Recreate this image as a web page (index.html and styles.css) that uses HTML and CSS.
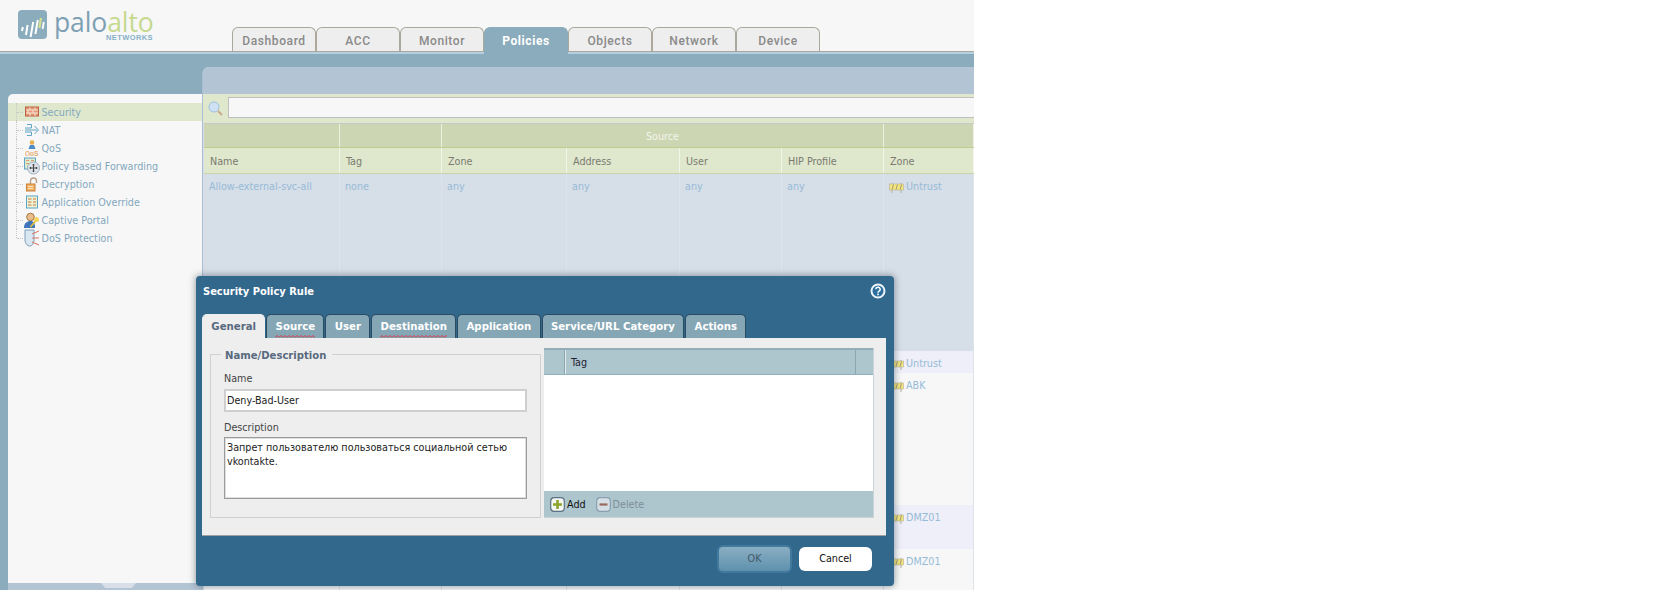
FILE: index.html
```html
<!DOCTYPE html>
<html lang="en">
<head>
<meta charset="utf-8">
<title>Security Policy Rule</title>
<link rel="stylesheet" href="styles.css">
</head>
<body>
<div class="app">
  <header class="topbar">
    <div class="logo">
      <svg class="logo-mark" width="29" height="29" viewBox="0 0 29 29"><rect width="29" height="29" rx="4" fill="#8aacbc"/><path d="M4 21l.8-4M8 25l1.6-10M12.6 27l2.6-15M17.4 24l2.4-14" stroke="#fff" stroke-width="2"/><path d="M21.4 18l1.6-10" stroke="#d3e08f" stroke-width="2.2"/><path d="M24.6 19l1.2-7" stroke="#fff" stroke-width="1.8"/></svg>
      <div class="logo-text">
        <div class="logo-word"><span class="logo-palo">palo</span><span class="logo-alto">alto</span></div>
        <div class="logo-sub">NETWORKS</div>
      </div>
    </div>
    <nav class="tabs">
      <div class="tab">Dashboard</div>
      <div class="tab">ACC</div>
      <div class="tab">Monitor</div>
      <div class="tab active">Policies</div>
      <div class="tab">Objects</div>
      <div class="tab">Network</div>
      <div class="tab">Device</div>
    </nav>
  </header>
  <main class="workspace">
    <aside class="side-col">
      <div class="sidebar">
        <div class="tree-item selected"><svg class="ic" viewBox="0 0 14 16"><rect y="3" width="13" height="9" fill="#e39a76" stroke="#b9613f" x=".5"/><path d="M1 6h12M1 9h12M5 3.500v2.500M10 3.500v2.500M3 6v3M8 6v3M5 9v3M10 9v3" stroke="#fbe3d4" fill="none"/></svg><span>Security</span></div>
        <div class="tree-item"><svg class="ic" viewBox="0 0 14 16"><path d="M2 2.500h4.500v3.500H0M0 8h12M2 13.500h4.500V10H0M9.500 4l4 4-4 4" fill="none" stroke="#5fa4c4"/></svg><span>NAT</span></div>
        <div class="tree-item"><svg class="ic" viewBox="0 0 14 16"><circle cx="7" cy="2.500" r="2.300" fill="#e8b04f"/><path d="M3.500 9l1.500-4h4l1.500 4z" fill="#4d8cc8"/><text x="0" y="15.500" class="qos">QoS</text></svg><span>QoS</span></div>
        <div class="tree-item"><svg class="ic ic-wide" viewBox="0 0 16 17"><rect x=".5" y=".5" width="11" height="11" fill="#dcebd0" stroke="#5fa4c4"/><path d="M2 3h3M7 3h3M2 6h3" stroke="#d9a06a"/><circle cx="9.500" cy="10.500" r="6" fill="#dde3ea" stroke="#9fb2c0"/><path d="M9.500 6.500v8M5.500 10.500h8" stroke="#444"/><path d="M8.500 7.500h2M8.500 13.500h2M6.500 9.500v2M12.500 9.500v2" stroke="#444"/></svg><span>Policy Based Forwarding</span></div>
        <div class="tree-item"><svg class="ic" viewBox="0 0 14 16"><path d="M5.500 8V5a3 3 0 0 1 6 0v2" fill="none" stroke="#b9a08c" stroke-width="1.400"/><rect x="1.500" y="8" width="8.500" height="7" fill="#f0b060" stroke="#c9803c"/><path d="M3 10.500h5M3 12.500h5" stroke="#fbe3c0"/></svg><span>Decryption</span></div>
        <div class="tree-item"><svg class="ic" viewBox="0 0 14 16"><rect x="1.500" y="2" width="11" height="12" fill="#eaf2d8" stroke="#5fa4c4"/><path d="M3 5h3.500M8 5h3M3 8h3.500M8 8h3M3 11h3.500M8 11h3" stroke="#d9a06a" stroke-width="1.600"/></svg><span>Application Override</span></div>
        <div class="tree-item"><svg class="ic ic-wide" viewBox="0 0 16 16"><circle cx="6.500" cy="5" r="3.800" fill="#e9bd8c" stroke="#a67743"/><path d="M0 16c0-5 3-7 6.500-7S11 11 11 16z" fill="#3f76bb"/><circle cx="12.500" cy="7.500" r="2.500" fill="#f3d85d"/><path d="M11.500 9l-5 6" stroke="#e3c03c" stroke-width="1.700"/></svg><span>Captive Portal</span></div>
        <div class="tree-item"><svg class="ic ic-wide" viewBox="0 0 16 18"><path d="M1 1h9v10c0 3-2 6-4 6-3 0-5-3-5-6z" fill="#d9e7f2" stroke="#7e9fbb"/><path d="M8 5l7-3M8 9h7M8 13l7 3" stroke="#d9725f"/></svg><span>DoS Protection</span></div>
      </div>
      <div class="side-foot"><div class="grip"></div></div>
    </aside>
    <section class="content">
      <div class="content-head"></div>
      <div class="search-row">
        <svg class="search-ic" width="15" height="15" viewBox="0 0 15 15"><circle cx="6" cy="6" r="5" fill="#cfe1f2" stroke="#9cc0df"/><path d="M10 10l4 4" stroke="#c9a98c" stroke-width="2"/></svg>
        <div class="search-box"></div>
      </div>
      <div class="grid">
        <div class="grid-row group-row">
          <div class="c c1"></div><div class="c c2"></div><div class="c src">Source</div><div class="c c7"></div>
        </div>
        <div class="grid-row head-row">
          <div class="c c1">Name</div><div class="c c2">Tag</div><div class="c c3">Zone</div><div class="c c4">Address</div><div class="c c5">User</div><div class="c c6">HIP Profile</div><div class="c c7">Zone</div>
        </div>
        <div class="grid-row data-row sel">
          <div class="c c1">Allow-external-svc-all</div><div class="c c2">none</div><div class="c c3">any</div><div class="c c4">any</div><div class="c c5">any</div><div class="c c6">any</div>
          <div class="c c7 zone"><svg class="zone-ic" viewBox="0 0 15 11"><path d="M3 1v10M12 1v10" stroke="#b5b09a"/><rect x=".5" y="2" width="14" height="6" fill="#f4e57e" stroke="#b5b09a" stroke-width=".6"/><path d="M4.500 2.500L3 7.500M8.500 2.500L7 7.500M12.500 2.500L11 7.500" stroke="#a09a70"/></svg>Untrust</div>
        </div>
        <div class="grid-row data-row r2">
          <div class="c c1"></div><div class="c c2"></div><div class="c c3"></div><div class="c c4"></div><div class="c c5"></div><div class="c c6"></div>
          <div class="c c7 zone"><svg class="zone-ic" viewBox="0 0 15 11"><path d="M3 1v10M12 1v10" stroke="#b5b09a"/><rect x=".5" y="2" width="14" height="6" fill="#f4e57e" stroke="#b5b09a" stroke-width=".6"/><path d="M4.500 2.500L3 7.500M8.500 2.500L7 7.500M12.500 2.500L11 7.500" stroke="#a09a70"/></svg>Untrust</div>
        </div>
        <div class="grid-row data-row r3">
          <div class="c c1"></div><div class="c c2"></div><div class="c c3"></div><div class="c c4"></div><div class="c c5"></div><div class="c c6"></div>
          <div class="c c7 zone"><svg class="zone-ic" viewBox="0 0 15 11"><path d="M3 1v10M12 1v10" stroke="#b5b09a"/><rect x=".5" y="2" width="14" height="6" fill="#f4e57e" stroke="#b5b09a" stroke-width=".6"/><path d="M4.500 2.500L3 7.500M8.500 2.500L7 7.500M12.500 2.500L11 7.500" stroke="#a09a70"/></svg>ABK</div>
        </div>
        <div class="grid-row data-row r4">
          <div class="c c1"></div><div class="c c2"></div><div class="c c3"></div><div class="c c4"></div><div class="c c5"></div><div class="c c6"></div>
          <div class="c c7 zone"><svg class="zone-ic" viewBox="0 0 15 11"><path d="M3 1v10M12 1v10" stroke="#b5b09a"/><rect x=".5" y="2" width="14" height="6" fill="#f4e57e" stroke="#b5b09a" stroke-width=".6"/><path d="M4.500 2.500L3 7.500M8.500 2.500L7 7.500M12.500 2.500L11 7.500" stroke="#a09a70"/></svg>DMZ01</div>
        </div>
        <div class="grid-row data-row r5">
          <div class="c c1"></div><div class="c c2"></div><div class="c c3"></div><div class="c c4"></div><div class="c c5"></div><div class="c c6"></div>
          <div class="c c7 zone"><svg class="zone-ic" viewBox="0 0 15 11"><path d="M3 1v10M12 1v10" stroke="#b5b09a"/><rect x=".5" y="2" width="14" height="6" fill="#f4e57e" stroke="#b5b09a" stroke-width=".6"/><path d="M4.500 2.500L3 7.500M8.500 2.500L7 7.500M12.500 2.500L11 7.500" stroke="#a09a70"/></svg>DMZ01</div>
        </div>
      </div>
    </section>
  </main>
  <div class="dialog">
    <div class="dialog-title">
      <span>Security Policy Rule</span>
      <svg class="help" width="16" height="16" viewBox="0 0 16 16"><circle cx="8" cy="8" r="6.500" fill="#2c6f9e" stroke="#eef4f8" stroke-width="2"/><path d="M5.800 6.300a2.200 2 0 1 1 3.200 1.800c-.7.400-1 .8-1 1.600" fill="none" stroke="#fff" stroke-width="1.500"/><rect x="7.200" y="10.600" width="1.600" height="1.600" fill="#fff"/></svg>
    </div>
    <div class="dtabs">
      <div class="dtab on">General</div>
      <div class="dtab err">Source</div>
      <div class="dtab">User</div>
      <div class="dtab err">Destination</div>
      <div class="dtab">Application</div>
      <div class="dtab">Service/URL Category</div>
      <div class="dtab">Actions</div>
    </div>
    <div class="dpanel">
      <fieldset class="nd">
        <legend>Name/Description</legend>
        <label class="lbl">Name</label>
        <div class="inp">Deny-Bad-User</div>
        <label class="lbl lbl2">Description</label>
        <div class="txt">Запрет пользователю пользоваться социальной сетью vkontakte.</div>
      </fieldset>
      <div class="tagbox">
        <div class="tag-head"><div class="th-a"></div><div class="th-b">Tag</div><div class="th-c"></div></div>
        <div class="tag-body"></div>
        <div class="tag-foot">
          <span class="tbtn"><svg width="15" height="15" viewBox="0 0 15 15"><rect x=".7" y=".7" width="13.600" height="13.600" rx="3.500" fill="#f4f6f2" stroke="#5d7284" stroke-width="1.200"/><path d="M7.500 3v9M3 7.500h9" stroke="#8da52f" stroke-width="2.600"/></svg>Add</span>
          <span class="tbtn off"><svg width="15" height="15" viewBox="0 0 15 15"><rect x=".7" y=".7" width="13.600" height="13.600" rx="3.500" fill="#d5dfe6" stroke="#8ba0ae" stroke-width="1.200"/><path d="M3.500 7.500h8" stroke="#9a6a5c" stroke-width="2.200"/></svg>Delete</span>
        </div>
      </div>
    </div>
    <div class="dfoot">
      <div class="btn ok">OK</div>
      <div class="btn cancel">Cancel</div>
    </div>
  </div>
</div>
</body>
</html>
```
FILE: styles.css
```css
* { box-sizing: border-box; }
html, body { margin: 0; padding: 0; background: #fff; }
body { width: 1662px; height: 590px; overflow: hidden; font-family: "DejaVu Sans Condensed", "DejaVu Sans", sans-serif; font-stretch: condensed; }
.app { position: relative; width: 974px; height: 590px; overflow: hidden; background: #8aacbc; display: flex; flex-direction: column; }

.topbar { height: 54px; flex: none; background: #f7f7f7; border-bottom: 2px solid #b5d0e0; box-shadow: inset 0 -1px 0 #a9a9a0; display: flex; }
.logo { width: 232px; flex: none; padding: 10px 0 0 18px; display: flex; gap: 7px; }
.logo-mark { flex: none; }
.logo-text { width: 99px; }
.logo-word { font-family: "Open Sans", "Liberation Sans", sans-serif; font-stretch: normal; font-size: 26.500px; line-height: 24px; height: 24px; letter-spacing: -.1px; white-space: nowrap; display: flex; }
.logo-palo { color: #7da0b4; display: block; line-height: 24px; height: 24px; }
.logo-alto { color: #c6d98f; display: block; line-height: 24px; height: 24px; }
.logo-sub { font-family: "Liberation Sans", sans-serif; font-stretch: normal; font-size: 7.500px; line-height: 8px; color: #86b0c8; text-align: right; letter-spacing: .4px; font-weight: 700; }
.tabs { display: flex; padding-top: 27px; align-items: flex-start; }
.tab { width: 84px; height: 24px; font-family: Roboto, "Liberation Sans", sans-serif; font-stretch: normal; font-size: 12px; font-weight: 500; color: #8a8a8a; letter-spacing: .6px; text-align: center; line-height: 26px; background: #eeeeee; border: 1px solid #aaa89c; border-bottom: 0; border-radius: 6px 6px 0 0; }
.tab.active { height: 27px; background: #8aacbc; color: #fff; font-weight: 700; border-color: #8aacbc; }

.workspace { flex: 1; display: flex; padding-left: 8px; min-height: 0; }
.side-col { width: 194px; flex: none; padding-top: 40px; display: flex; flex-direction: column; }
.sidebar { flex: 1; background: #f7f7f7; border-radius: 5px 0 0 0; padding-top: 9px; }
.side-foot { height: 7px; flex: none; background: #b3c4d4; display: flex; padding-left: 93px; }
.grip { width: 35px; height: 5px; background: #d8dfe8; clip-path: polygon(0 0, 100% 0, 88% 100%, 12% 100%); }
.tree-item { height: 18px; display: flex; align-items: center; padding-left: 17px; font-size: 10.700px; color: #83a7bd; white-space: nowrap; position: relative; }
.tree-item::before { content: ""; position: absolute; left: 8px; top: 0; bottom: 0; width: 8px; border-left: 1px dotted #c8c8c8; }
.tree-item::after { content: ""; position: absolute; left: 9px; top: 9px; width: 6px; border-top: 1px dotted #c8c8c8; }
.tree-item:last-child::before { bottom: 9px; }
.tree-item.selected { background: #dfe7cd; }
.ic { width: 14px; height: 16px; flex: none; margin-right: 2.500px; }
.ic-wide { width: 16px; height: 18px; margin-left: -1px; margin-right: 1.500px; position: relative; z-index: 1; }
.qos { font: 700 6.500px "Liberation Sans", sans-serif; fill: #e5ac73; }

.content { flex: 1; margin-top: 13px; min-width: 0; background: #d6dee8; border-left: 1px solid #abbdd2; border-radius: 7px 0 0 0; overflow: hidden; }
.content-head { height: 27px; background: #b3c4d4; }
.search-row { height: 29px; background: #dfe7cd; display: flex; align-items: flex-start; gap: 5px; padding: 3px 0 0 5px; }
.search-ic { flex: none; margin-top: 4px; }
.search-box { flex: 1; height: 21px; margin-right: -2px; background: #f7f7f7; border: 1px solid #bfbfbf; }
.grid { margin-left: 1px; }
.grid-row { display: grid; grid-template-columns: 136px 102px 125px 113px 102px 102px 90px; }
.c { font-size: 10.700px; padding: 0 6px; border-right: 1px solid #dce3e9; white-space: nowrap; overflow: hidden; }
.group-row { height: 25px; background: #cdd6b2; border-top: 1px solid #c8c8c8; border-bottom: 1px solid #c0cc90; line-height: 25px; }
.group-row .c { border-right: 1px solid #eef0e4; }
.group-row .src { grid-column: 3 / span 4; text-align: center; color: #f3f4ec; }
.head-row { height: 26px; background: #dfe7cd; border-bottom: 1px solid #c9d4a8; line-height: 27px; color: #7b7b70; }
.head-row .c { border-right: 1px solid #f3f5ea; }
.data-row { color: #96bbd7; line-height: 14px; }
.data-row .c { padding: 6px 4px 0 5px; }
.sel { height: 177px; background: #d6dee8; }
.r2 { height: 22px; background: #eeeff8; }
.r3 { height: 132px; background: #f7f7f7; }
.r4 { height: 44px; background: #eeeff8; }
.r5 { height: 60px; background: #f7f7f7; }
.data-row .zone { display: flex; align-items: flex-start; gap: 2px; padding-left: 5px; }
.zone-ic { width: 15px; height: 11px; margin-top: 2px; flex: none; }

.dialog { position: absolute; left: 196px; top: 276px; width: 698px; height: 310px; background: #31688c; border-radius: 4px; box-shadow: 0 0 6px 1px rgba(70,85,95,.5); display: flex; flex-direction: column; padding: 0 8px 0 6px; }
.dialog-title { height: 38px; flex: none; display: flex; justify-content: space-between; align-items: center; padding: 0 0 8px 1px; color: #fff; font-weight: 700; font-size: 11px; }
.help { margin-right: 0; }
.dtabs { display: flex; gap: 1px; height: 24px; flex: none; }
.dtab { height: 24px; padding: 0 8.300px; background: #85a6b5; color: #fff; font-weight: 700; font-size: 11.300px; line-height: 23px; border: 1px solid #2a4a60; border-bottom: 0; border-radius: 5px 5px 0 0; position: relative; white-space: nowrap; }
.dtab.on { background: #eeeeee; color: #586a7e; border-color: #eeeeee; z-index: 1; }
.dtab.err::after { content: ""; position: absolute; left: 8px; right: 8px; bottom: 0; height: 3px; background: url("data:image/svg+xml,%3Csvg xmlns='http://www.w3.org/2000/svg' width='4' height='3'%3E%3Cpath d='M0 2.500L2 .5L4 2.500' fill='none' stroke='%23e0303c'/%3E%3C/svg%3E") repeat-x; }
.dpanel { flex: none; height: 198px; background: #eeeeee; border-bottom: 1px solid #9aa0a4; display: flex; align-items: flex-start; padding: 10px 0 0 8px; gap: 3px; }
.nd { width: 331px; height: 170px; margin: 0; padding: 0 12px 0 13px; border: 1px solid #d0d0d0; flex: none; }
.nd legend { font-weight: 700; font-size: 11.200px; color: #586a7e; padding: 0 6px 0 4px; margin-left: -3px; line-height: 12px; position: relative; top: 2px; }
.lbl { display: block; font-size: 10.700px; color: #444; line-height: 14px; margin: 12px 0 3px; }
.lbl2 { margin: 9px 0 2px; }
.inp { height: 23px; width: 303px; background: #fff; border: 2px solid #cfcfcf; font-size: 10.700px; color: #222; line-height: 19px; padding-left: 1px; }
.txt { height: 62px; width: 303px; background: #fff; border: 1px solid #9c9c9c; box-shadow: inset 0 0 0 1px #ddd; font-size: 10.700px; color: #222; line-height: 14px; padding: 3px 2px; }
.tagbox { width: 330px; height: 170px; display: flex; flex-direction: column; flex: none; border: 1px solid #c9d3d8; border-top: 0; border-left: 0; }
.tag-head { height: 27px; flex: none; display: flex; background: #adc6cd; border-top: 2px solid #94aeb8; border-bottom: 1px solid #90b0bc; font-size: 10.700px; color: #223; line-height: 25px; }
.th-a { width: 21px; border-right: 1px solid #8ca6b0; }
.th-b { flex: 1; padding-left: 5px; border-left: 1px solid #e3eced; border-right: 1px solid #8ca6b0; }
.th-c { width: 17px; }
.tag-body { flex: 1; background: #fff; }
.tag-foot { height: 26px; flex: none; background: #adc6cd; display: flex; align-items: center; gap: 10px; padding-left: 6px; font-size: 10.700px; color: #111; }
.tbtn { display: inline-flex; align-items: center; gap: 2px; }
.tbtn.off { color: #7d8f98; }
.dfoot { flex: 1; display: flex; justify-content: flex-end; align-items: flex-start; gap: 7px; padding: 9px 14px 0 0; }
.btn { border-radius: 6px; text-align: center; font-size: 10.700px; }
.ok { width: 75px; height: 28px; background: linear-gradient(#8aaec2, #5f91ae); border: 2px solid #41799f; color: #40586a; line-height: 24px; }
.cancel { width: 73px; height: 24px; margin-top: 2px; background: #fff; color: #111; line-height: 24px; }
```
